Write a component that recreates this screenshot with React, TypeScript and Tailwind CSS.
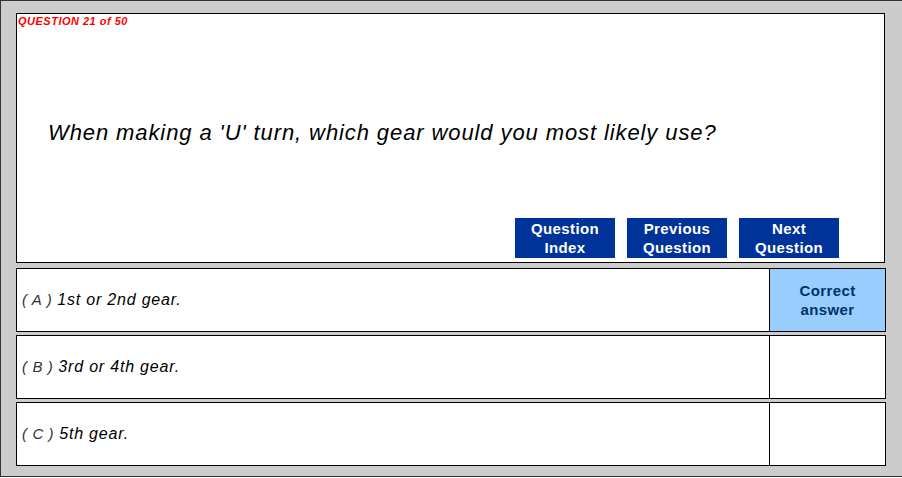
export default function App() {
  const answers = [
    { key: 'A', text: '1st or 2nd gear.', correct: true },
    { key: 'B', text: '3rd or 4th gear.', correct: false },
    { key: 'C', text: '5th gear.', correct: false },
  ];

  return (
    <div
      className="w-[902px] h-[478px] bg-white"
      style={{ fontFamily: '"Liberation Sans", Arial, sans-serif' }}
    >
      <div className="w-[902px] h-[477px] bg-[#cccccc] border-t border-l border-b border-[#333333] pl-[15px] pt-[12px]">
        {/* question panel */}
        <div className="w-[869px] h-[250px] bg-white border border-black flex flex-col">
          <div className="pl-[1px] pt-[1px] text-[11px] leading-[13px] tracking-[0.5px] font-bold italic text-[#ff0000]">
            QUESTION 21 of 50
          </div>
          <div className="mt-[92px] pl-[31px] text-[22px] leading-[26px] tracking-[0.9px] italic text-black">
            When making a 'U' turn, which gear would you most likely use?
          </div>
          <div className="mt-auto flex justify-end gap-[12px] pr-[45px] pb-[4px]">
            <NavButton top="Question" bottom="Index" />
            <NavButton top="Previous" bottom="Question" />
            <NavButton top="Next" bottom="Question" />
          </div>
        </div>

        {/* answers */}
        <div className="mt-[5px] flex flex-col gap-[3px]">
          {answers.map((a) => (
            <div key={a.key} className="w-[870px] h-[64px] flex border border-black bg-white">
              <div className="flex-1 flex items-center pl-[5px] border-r border-black">
                <span className="text-[15px] tracking-[0.6px] italic text-[#333333] mr-[5px]">( {a.key} )</span>
                <span className="text-[16px] tracking-[0.8px] italic text-black">{a.text}</span>
              </div>
              <div
                className={`w-[115px] flex items-center justify-center text-center text-[15px] leading-[19px] tracking-[0.4px] font-bold text-[#003366] ${
                  a.correct ? 'bg-[#99ccff]' : 'bg-white'
                }`}
              >
                {a.correct ? (
                  <span>
                    Correct
                    <br />
                    answer
                  </span>
                ) : null}
              </div>
            </div>
          ))}
        </div>
      </div>
    </div>
  );
}

function NavButton({ top, bottom }: { top: string; bottom: string }) {
  return (
    <button className="w-[100px] h-[40px] bg-[#003399] text-white text-[15px] leading-[19px] tracking-[0.4px] font-bold text-center flex flex-col items-center justify-center">
      <span>{top}</span>
      <span>{bottom}</span>
    </button>
  );
}
